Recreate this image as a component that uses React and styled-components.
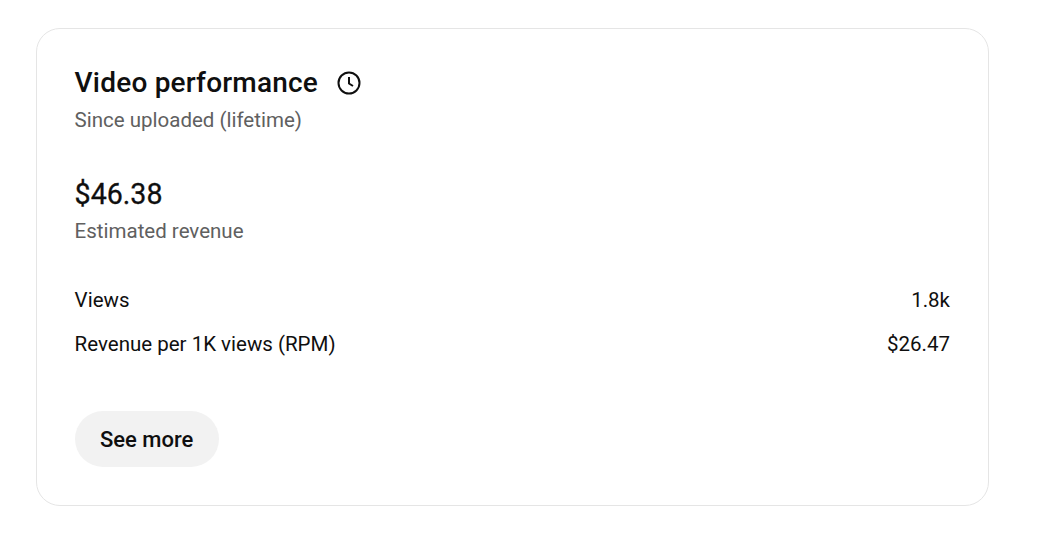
import styled, { createGlobalStyle } from 'styled-components'

const Global = createGlobalStyle`
  body {
    margin: 0;
    background: #fff;
    font-family: Roboto, "Liberation Sans", sans-serif;
  }
`

const Page = styled.div`
  width: 1046px;
  height: 540px;
  padding: 28px 0 0 36px;
  box-sizing: border-box;
`

const Card = styled.section`
  width: 953px;
  height: 478px;
  box-sizing: border-box;
  border: 1px solid #e5e5e5;
  border-radius: 24px;
  padding: 37px 38px 0 37.6px;
`

const TitleRow = styled.div`
  display: flex;
  align-items: center;
  gap: 19px;
  height: 34px;
`

const Title = styled.h2`
  margin: 0;
  font-size: 28px;
  font-weight: 500;
  letter-spacing: 0.2px;
  color: #0f0f0f;
  line-height: 34px;
`

const Muted = styled.div`
  margin-top: ${(p) => p.$top}px;
  font-size: 20.5px;
  line-height: 28px;
  color: #606060;
`

const Revenue = styled.div`
  margin-top: 42px;
  font-size: 28.6px;
  font-weight: 400;
  -webkit-text-stroke: 0.3px #0f0f0f;
  line-height: 36px;
  color: #0f0f0f;
`

const Rows = styled.div`
  margin-top: 41px;
  display: flex;
  flex-direction: column;
  gap: 16px;
`

const Row = styled.div`
  display: flex;
  justify-content: space-between;
  font-size: 20.5px;
  line-height: 28px;
  color: #0f0f0f;
`

const MoreButton = styled.button`
  display: block;
  margin-top: 53px;
  width: 144px;
  height: 56px;
  border: 0;
  padding: 0;
  border-radius: 28px;
  background: #f2f2f2;
  color: #0f0f0f;
  font-family: inherit;
  font-size: 22px;
  font-weight: 500;
`

function ClockIcon() {
  return (
    <svg width="24" height="24" viewBox="0 0 24 24" fill="none" stroke="#0f0f0f" strokeWidth="2">
      <circle cx="12" cy="12" r="10.5" />
      <path d="M12 6v6.5l4 2.5" />
    </svg>
  )
}

export default function App() {
  return (
    <Page>
      <Global />
      <Card>
        <TitleRow>
          <Title>Video performance</Title>
          <ClockIcon />
        </TitleRow>
        <Muted $top={6}>Since uploaded (lifetime)</Muted>
        <Revenue>$46.38</Revenue>
        <Muted $top={5}>Estimated revenue</Muted>
        <Rows>
          <Row>
            <span>Views</span>
            <span>1.8k</span>
          </Row>
          <Row>
            <span>Revenue per 1K views (RPM)</span>
            <span>$26.47</span>
          </Row>
        </Rows>
        <MoreButton>See more</MoreButton>
      </Card>
    </Page>
  )
}
